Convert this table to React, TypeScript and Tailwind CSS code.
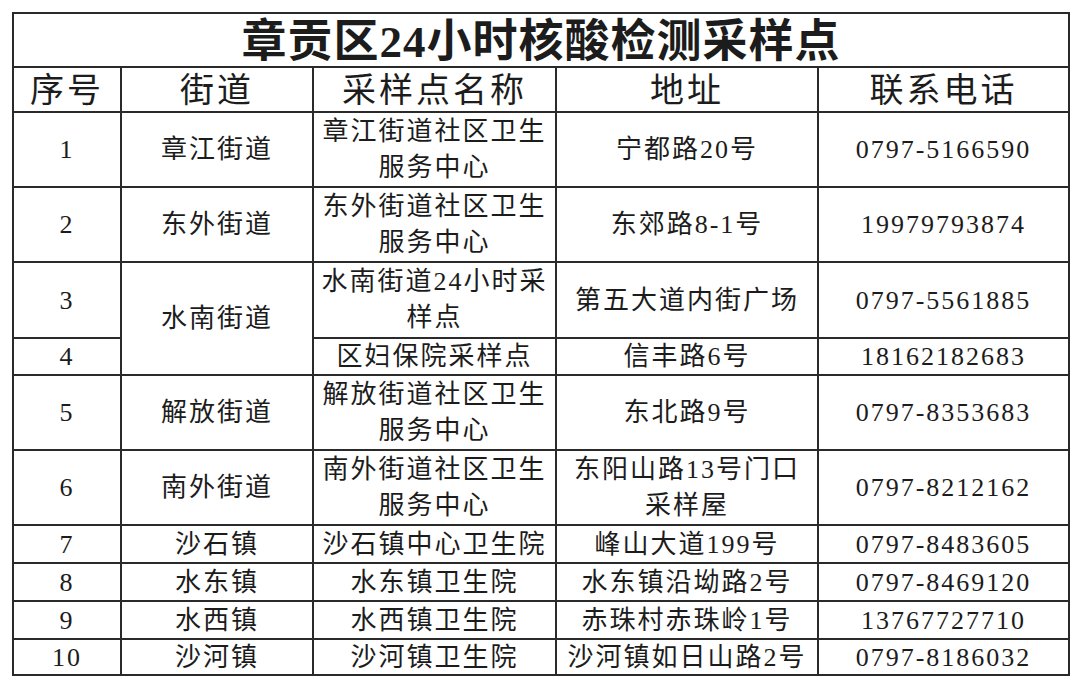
const rows: { no: string; street?: string; span?: number; site: string[]; addr: string[]; phone: string; h: string }[] = [
  { no: '1', street: '章江街道', site: ['章江街道社区卫生', '服务中心'], addr: ['宁都路20号'], phone: '0797-5166590', h: 'h-[75px]' },
  { no: '2', street: '东外街道', site: ['东外街道社区卫生', '服务中心'], addr: ['东郊路8-1号'], phone: '19979793874', h: 'h-[75px]' },
  { no: '3', street: '水南街道', span: 2, site: ['水南街道24小时采', '样点'], addr: ['第五大道内街广场'], phone: '0797-5561885', h: 'h-[76px]' },
  { no: '4', site: ['区妇保院采样点'], addr: ['信丰路6号'], phone: '18162182683', h: 'h-[37px]' },
  { no: '5', street: '解放街道', site: ['解放街道社区卫生', '服务中心'], addr: ['东北路9号'], phone: '0797-8353683', h: 'h-[75px]' },
  { no: '6', street: '南外街道', site: ['南外街道社区卫生', '服务中心'], addr: ['东阳山路13号门口', '采样屋'], phone: '0797-8212162', h: 'h-[75px]' },
  { no: '7', street: '沙石镇', site: ['沙石镇中心卫生院'], addr: ['峰山大道199号'], phone: '0797-8483605', h: 'h-[38px]' },
  { no: '8', street: '水东镇', site: ['水东镇卫生院'], addr: ['水东镇沿坳路2号'], phone: '0797-8469120', h: 'h-[38px]' },
  { no: '9', street: '水西镇', site: ['水西镇卫生院'], addr: ['赤珠村赤珠岭1号'], phone: '13767727710', h: 'h-[38px]' },
  { no: '10', street: '沙河镇', site: ['沙河镇卫生院'], addr: ['沙河镇如日山路2号'], phone: '0797-8186032', h: 'h-[36px]' },
]

const Lines = ({ lines }: { lines: string[] }) => (
  <>
    {lines.map((l, i) => (
      <div key={i} className={`whitespace-nowrap ${lines.length > 1 ? 'leading-[36px]' : 'leading-[33px]'}`}>
        {l}
      </div>
    ))}
  </>
)

const cell = 'border-2 border-[#2a2a2a] p-0 text-center align-middle'

export default function App() {
  return (
    <div
      className="h-[687px] w-[1080px] bg-white pl-[12px] pt-[12px] text-[#1c1c1c]"
      style={{ fontFamily: '"Liberation Serif", "Noto Sans CJK SC", serif' }}
    >
      <table className="w-[1056px] table-fixed border-collapse">
        <colgroup>
          <col className="w-[108px]" />
          <col className="w-[192px]" />
          <col className="w-[243px]" />
          <col className="w-[262px]" />
          <col className="w-[251px]" />
        </colgroup>
        <thead>
          <tr className="h-[54px]">
            <th colSpan={5} className={`${cell} pt-[4px] text-[45px] font-bold leading-[46px] tracking-[1px]`}>
              章贡区24小时核酸检测采样点
            </th>
          </tr>
          <tr className="h-[45px]">
            {['序号', '街道', '采样点名称', '地址', '联系电话'].map((t) => (
              <th key={t} className={`${cell} pt-[3px] text-[34px] font-normal leading-[38px] tracking-[3px]`}>
                {t}
              </th>
            ))}
          </tr>
        </thead>
        <tbody className="text-[26px] tracking-[2px]">
          {rows.map((r) => (
            <tr key={r.no} className={r.h}>
              <td className={cell}>
                <Lines lines={[r.no]} />
              </td>
              {r.street && (
                <td rowSpan={r.span} className={cell}>
                  <Lines lines={[r.street]} />
                </td>
              )}
              <td className={cell}>
                <Lines lines={r.site} />
              </td>
              <td className={cell}>
                <Lines lines={r.addr} />
              </td>
              <td className={cell}>
                <Lines lines={[r.phone]} />
              </td>
            </tr>
          ))}
        </tbody>
      </table>
    </div>
  )
}
